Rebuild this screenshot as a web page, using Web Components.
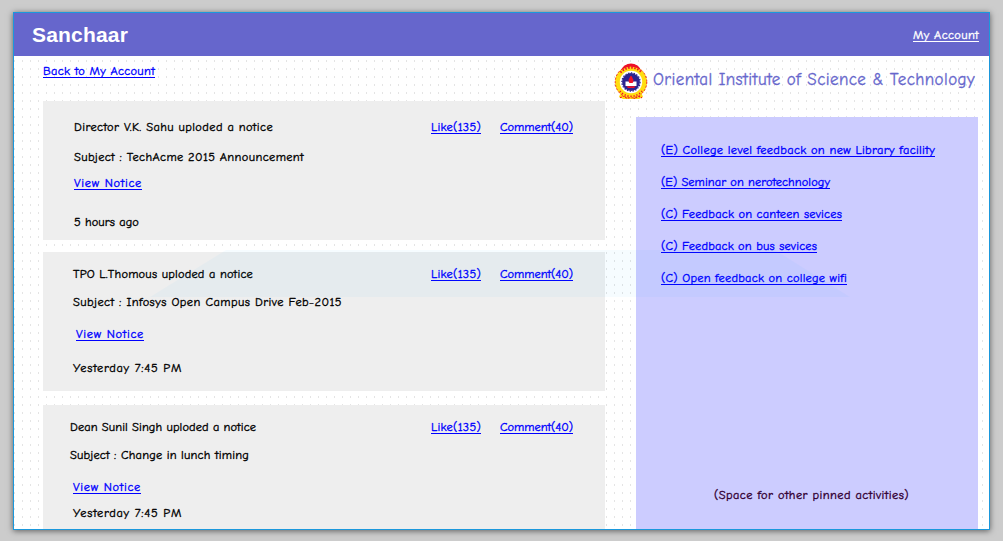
<!DOCTYPE html>
<html lang="en">
<head>
<meta charset="utf-8">
<title>Sanchaar</title>
<style>
html, body { margin: 0; height: 100%; }
body { background: #ccc; overflow: hidden; font: 12.4px/16px "Comic Sans MS", "Comic Neue", "Noto Sans", sans-serif; color: #000; }
</style>
</head>
<body>
<notice-app></notice-app>
<script>
/* A single line of text whose tracking is adjusted to a given width. */
class FitText extends HTMLElement {
  connectedCallback() {
    if (this.shadowRoot) return;
    this.attachShadow({ mode: 'open' }).innerHTML = `<style>
      :host { display: block; width: max-content; white-space: pre; -webkit-text-stroke: var(--stroke, .35px); }
      :host([link]) { color: #00f; cursor: pointer; text-decoration: underline 1px; text-underline-offset: 2px; text-decoration-skip-ink: none; }
      :host([light]) { color: #fff; }
      </style><slot></slot>`;
    const want = parseFloat(this.getAttribute('fit'));
    if (want) {
      const n = this.textContent.length;
      const have = this.getBoundingClientRect().width;
      this.style.letterSpacing = ((want - have) / n).toFixed(4) + 'px';
    }
  }
}
customElements.define('fit-text', FitText);

class CollegeCrest extends HTMLElement {
  connectedCallback() {
    this.attachShadow({ mode: 'open' }).innerHTML = `<style>
      :host { display: block; width: 34px; height: 37px; } svg { display: block; }
      </style>
      <svg width="34" height="37" viewBox="0 0 34 37">
        <path d="M8 6Q10 1 17 .5Q24 1 26 6L25 11H9Z" fill="#ee1128"/>
        <path d="M7 29L5 34L9 36H25L29 34L27 29Z" fill="#fd1"/>
        <path d="M6 34.8L10 33L13 35.4L17 33.7L21 35.4L24 33L28 34.8" fill="none" stroke="#ee1128" stroke-width="1.200" stroke-dasharray="2 1"/>
        <circle cx="17" cy="19" r="16" fill="#fd1"/>
        <circle cx="17" cy="19" r="15.800" fill="none" stroke="#ee1128" stroke-width=".9" stroke-dasharray="2 1.700"/>
        <path d="M7 7Q10 1.500 17 1Q24 1.500 27 7Q22 3.500 17 3.500T7 7Z" fill="#ee1128"/>
        <path d="M6.500 9.500A14 14 0 0 1 27.500 9.500" fill="none" stroke="#ee1128" stroke-width="2" stroke-dasharray="1.500 1.500"/>
        <path d="M6 28A14 14 0 0 0 28 28" fill="none" stroke="#ee1128" stroke-width="1.600" stroke-dasharray="1.200 1.800"/>
        <circle cx="17" cy="19" r="11.200" fill="#fff"/>
        <circle cx="17" cy="19" r="8.900" fill="#2b2490"/>
        <circle cx="17" cy="19" r="9.100" fill="none" stroke="#2b2490" stroke-width="1.300" stroke-dasharray="1.4 1.430"/>
        <path d="M16.500 13H17.500L19.500 17L19 20H15L14.500 17Z" fill="#ee1128"/>
        <path d="M11.500 18.500H14.500L15.500 20H18.500L19.500 18.500H22.500V23H11.500Z" fill="#fff"/>
        <path d="M12.500 23.200H21.500L20 25H14Z" fill="#ee1128"/>
      </svg>`;
  }
}
customElements.define('college-crest', CollegeCrest);

class AppHeader extends HTMLElement {
  connectedCallback() {
    this.attachShadow({ mode: 'open' }).innerHTML = `<style>
      :host { display: flex; justify-content: space-between; align-items: center; box-sizing: border-box; height: 43px; padding: 0 10px 0 18px; background: #66c; }
      .brand { font: bold 21px/24px "Liberation Sans", Arial, sans-serif; color: #fff; --stroke: 0; }
      </style><fit-text class="brand" fit="96">Sanchaar</fit-text><slot></slot>`;
  }
}
customElements.define('app-header', AppHeader);

class NoticeCard extends HTMLElement {
  connectedCallback() {
    this.attachShadow({ mode: 'open' }).innerHTML = `<style>
      :host { display: flex; justify-content: space-between; box-sizing: border-box; height: 139px; background: #eee; padding-right: 32px; }
      .actions { display: flex; gap: 19px; height: 16px; padding-top: var(--top, 18px); }
      </style>
      <div><slot></slot></div>
      <div class="actions"><fit-text link fit="50">Like(135)</fit-text><fit-text link fit="73">Comment(40)</fit-text></div>`;
  }
}
customElements.define('notice-card', NoticeCard);

class PinnedPanel extends HTMLElement {
  connectedCallback() {
    this.attachShadow({ mode: 'open' }).innerHTML = `<style>
      :host { display: flex; flex-direction: column; gap: 16px; box-sizing: border-box; width: 342px; flex: 1; background: #ccf; padding: 25px 0 26px 25px; margin-left: 22px; }
      .space { margin: auto 0 0 53px; color: #330033; }
      </style><slot></slot><fit-text class="space" fit="195">(Space for other pinned activities)</fit-text>`;
  }
}
customElements.define('pinned-panel', PinnedPanel);

class NoticeApp extends HTMLElement {
  connectedCallback() {
    this.attachShadow({ mode: 'open' }).innerHTML = `<style>
      :host { display: block; box-sizing: border-box; height: 541px; padding: 12px 13px 11px; }
      .frame { position: relative; box-sizing: border-box; width: 977px; height: 518px; border: 1px solid #1b98dc; display: flex; flex-direction: column; overflow: hidden; background-color: #fff;
        background-image: conic-gradient(from 0deg at 1px 2px, transparent 270deg, #e4e4e4 0); background-size: 8px 8px; background-position: 0 7px; }
      .shadow { width: 977px; height: 518px; box-shadow: 0 1px 6px rgba(0,0,0,.55); }
      .body { display: flex; flex: 1; min-height: 0; }
      .feed { width: 562px; margin-left: 29px; flex: none; }
      .back { margin-top: 7px; }
      notice-card { margin-top: 14px; }
      notice-card:first-of-type { margin-top: 22px; }
      .side { margin-left: 9px; display: flex; flex-direction: column; }
      .college { display: flex; height: 61px; box-sizing: border-box; padding: 7px 0 0 0; gap: 5px; }
      .college fit-text { font-size: 17px; line-height: 20px; color: #66c; padding-top: 7px; --stroke: .3px; }
      .mark { position: absolute; left: 136px; top: 237px; pointer-events: none; display: block; }
      </style>
      <div class="shadow"><div class="frame">
        <app-header><fit-text link light fit="66">My Account</fit-text></app-header>
        <div class="body">
          <div class="feed">
            <fit-text class="back" link fit="112">Back to My Account</fit-text>
            <notice-card>
              <fit-text fit="199" style="margin:18px 0 0 31px">Director V.K. Sahu uploded a notice</fit-text>
              <fit-text fit="230" style="margin:14px 0 0 31px">Subject : TechAcme 2015 Announcement</fit-text>
              <fit-text link fit="68" style="margin:10px 0 0 31px">View Notice</fit-text>
              <fit-text fit="65" style="margin:23px 0 0 31px">5 hours ago</fit-text>
            </notice-card>
            <notice-card style="--top:14px;margin-top:12px">
              <fit-text fit="180" style="margin:14px 0 0 30px">TPO L.Thomous uploded a notice</fit-text>
              <fit-text fit="269" style="margin:12px 0 0 30px">Subject : Infosys Open Campus Drive Feb-2015</fit-text>
              <fit-text link fit="68" style="margin:16px 0 0 33px">View Notice</fit-text>
              <fit-text fit="109" style="margin:18px 0 0 30px">Yesterday 7:45 PM</fit-text>
            </notice-card>
            <notice-card style="--top:14px">
              <fit-text fit="186" style="margin:14px 0 0 27px">Dean Sunil Singh uploded a notice</fit-text>
              <fit-text fit="179" style="margin:12px 0 0 27px">Subject : Change in lunch timing</fit-text>
              <fit-text link fit="68" style="margin:16px 0 0 30px">View Notice</fit-text>
              <fit-text fit="109" style="margin:10px 0 0 30px">Yesterday 7:45 PM</fit-text>
            </notice-card>
          </div>
          <div class="side">
            <div class="college"><college-crest></college-crest><fit-text fit="322">Oriental Institute of Science &amp; Technology</fit-text></div>
            <pinned-panel>
              <fit-text link fit="274">(E) College level feedback on new Library facility</fit-text>
              <fit-text link fit="169">(E) Seminar on nerotechnology</fit-text>
              <fit-text link fit="181">(C) Feedback on canteen sevices</fit-text>
              <fit-text link fit="156">(C) Feedback on bus sevices</fit-text>
              <fit-text link fit="186">(C) Open feedback on college wifi</fit-text>
            </pinned-panel>
          </div>
        </div>
        <svg class="mark" width="702" height="47" viewBox="0 0 702 47"><path d="M76 0H625L700 47H0Z" fill="#00b8ff" fill-opacity=".035"/></svg>
      </div></div>`;
  }
}
customElements.define('notice-app', NoticeApp);
</script>
</body>
</html>
